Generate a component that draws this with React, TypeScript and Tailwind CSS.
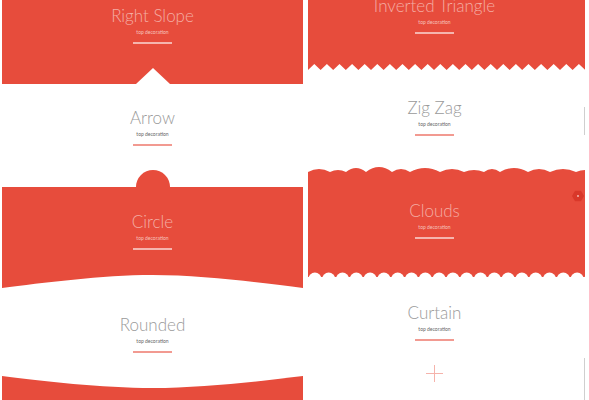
import React from 'react';

const RED = '#e74c3c';

interface HeadingProps {
  title: string;
  dark?: boolean;
}

const Heading: React.FC<HeadingProps> = ({ title, dark }) => (
  <div className="flex flex-col items-center">
    <h2
      className={`text-[17px] leading-[20px] font-light ${
        dark ? 'text-[#9a9a9a]' : 'text-[#f4aca4]'
      }`}
    >
      {title}
    </h2>
    <p
      className={`mt-[3px] text-[5px] leading-[6px] ${dark ? 'text-[#666]' : 'text-[#f6c2bc]'}`}
    >
      top decoration
    </p>
    <div className={`mt-[7px] h-[2px] w-[39px] ${dark ? 'bg-[#f29a91]' : 'bg-[#f5b5ae]'}`} />
  </div>
);

// zigzag edge for the bottom of a panel
const zigzag = (width: number, period: number, depth: number) => {
  let d = `M0,${depth}`;
  for (let x = 0; x < width; x += period) {
    d += ` L${x + period / 2},0 L${x + period},${depth}`;
  }
  return d + ` L${width},${depth + 2} L0,${depth + 2} Z`;
};

// bumpy cloud top edge, white area above the line
const cloudTop = (width: number) => {
  const bumps = [22, 16, 20, 26, 18, 30, 24, 20, 16, 28, 22, 26, 18, 24];
  const peaks = [3, 4, 2, 1, 3, 2, 3, 4, 3, 2, 3, 3, 4, 2];
  let x = 0;
  let d = `M0,0 L0,6`;
  let i = 0;
  while (x < width) {
    const w = bumps[i % bumps.length];
    const p = peaks[i % peaks.length];
    const cy = 2 * p - 6;
    d += ` Q${x + w / 2},${cy} ${x + w},6`;
    x += w;
    i++;
  }
  return d + ` L${x},0 Z`;
};

const scallops = (width: number, period: number) => {
  const items = [];
  for (let x = period / 2; x < width + period; x += period) items.push(x);
  return items;
};

const LeftColumn: React.FC = () => (
  <div className="flex w-[301px] shrink-0 flex-col">
    {/* Right Slope */}
    <section className="relative h-[84px] bg-[#e74c3c] pt-[6px]">
      <Heading title="Right Slope" />
      <svg className="absolute bottom-0 left-[133.5px]" width="34" height="16" viewBox="0 0 34 16">
        <path d="M0,16 L17,0 L34,16 Z" fill="#fff" />
      </svg>
    </section>

    {/* Arrow */}
    <section className="relative h-[103px] bg-white pt-[24px]">
      <Heading title="Arrow" dark />
    </section>

    {/* Circle */}
    <section className="relative h-[102px] bg-[#e74c3c] pt-[25px]">
      <svg className="absolute -top-[17px] left-[133.5px]" width="34" height="17" viewBox="0 0 34 17">
        <path d="M0,17 A17,17 0 0 1 34,17 Z" fill={RED} />
      </svg>
      <Heading title="Circle" />
      <svg className="absolute bottom-0 left-0" width="301" height="14" viewBox="0 0 301 14">
        <path d="M0,14 L0,13 C40,8 100,0 150.5,0 C201,0 261,8 301,13 L301,14 Z" fill="#fff" />
      </svg>
    </section>

    {/* Rounded */}
    <section className="relative h-[87px] bg-white pt-[26px]">
      <Heading title="Rounded" dark />
    </section>
    <section className="relative h-[24px] bg-[#e74c3c]">
      <svg className="absolute left-0 top-0" width="301" height="13" viewBox="0 0 301 13">
        <path d="M0,0 L301,0 C261,5 201,12 150.5,12 C100,12 40,5 0,0 Z" fill="#fff" />
      </svg>
    </section>
  </div>
);

const RightColumn: React.FC = () => (
  <div className="flex w-[277px] shrink-0 flex-col">
    {/* Inverted Triangle */}
    <section className="relative h-[72px] bg-[#e74c3c] pr-[24px]">
      <div className="-mt-[4px]">
        <Heading title="Inverted Triangle" />
      </div>
      <svg className="absolute bottom-0 left-0" width="277" height="8" viewBox="0 0 277 8">
        <path d={zigzag(277, 12.6, 6)} fill="#fff" />
      </svg>
    </section>

    {/* Zig Zag */}
    <section className="relative h-[94px] bg-white pr-[24px] pt-[26px]">
      <Heading title="Zig Zag" dark />
      <div className="absolute right-0 top-[35px] h-[28px] w-px bg-[#cfcfcf]" />
    </section>

    {/* Clouds */}
    <section className="relative h-[111px] bg-[#e74c3c] pr-[24px] pt-[35px]">
      <svg className="absolute left-0 top-0" width="277" height="7" viewBox="0 0 277 7">
        <path d={cloudTop(277)} fill="#fff" />
      </svg>
      <Heading title="Clouds" />
      <svg className="absolute bottom-0 left-0" width="277" height="6" viewBox="0 0 277 6">
        {scallops(277, 13.8).map((cx) => (
          <circle key={cx} cx={cx} cy={8} r={6.5} fill="#fff" />
        ))}
      </svg>
      <svg className="absolute left-[264px] top-[24px]" width="12" height="12" viewBox="0 0 12 12">
        <path d="M3,0.8 L9,0.8 L12,6 L9,11.2 L3,11.2 L0,6 Z" fill="#d9382a" />
        <circle cx="6" cy="6" r="0.9" fill="#f7c6c0" />
      </svg>
    </section>

    {/* Curtain */}
    <section className="relative flex-1 bg-white pr-[24px] pt-[26px]">
      <Heading title="Curtain" dark />
      <div className="mt-[24px] flex justify-center">
        <svg width="17" height="17" viewBox="0 0 17 17">
          <path d="M8.5,0 V17 M0,8.5 H17" stroke="#f5b3ab" strokeWidth="1" />
        </svg>
      </div>
      <div className="absolute bottom-0 right-0 top-[81px] w-px bg-[#cfcfcf]" />
    </section>
  </div>
);

const App: React.FC = () => {
  return (
    <div
      className="flex h-[400px] w-[589px] gap-[5px] overflow-hidden bg-white pl-[2px]"
      style={{ fontFamily: 'Lato, "Open Sans", sans-serif' }}
    >
      <LeftColumn />
      <RightColumn />
    </div>
  );
};

export default App;
